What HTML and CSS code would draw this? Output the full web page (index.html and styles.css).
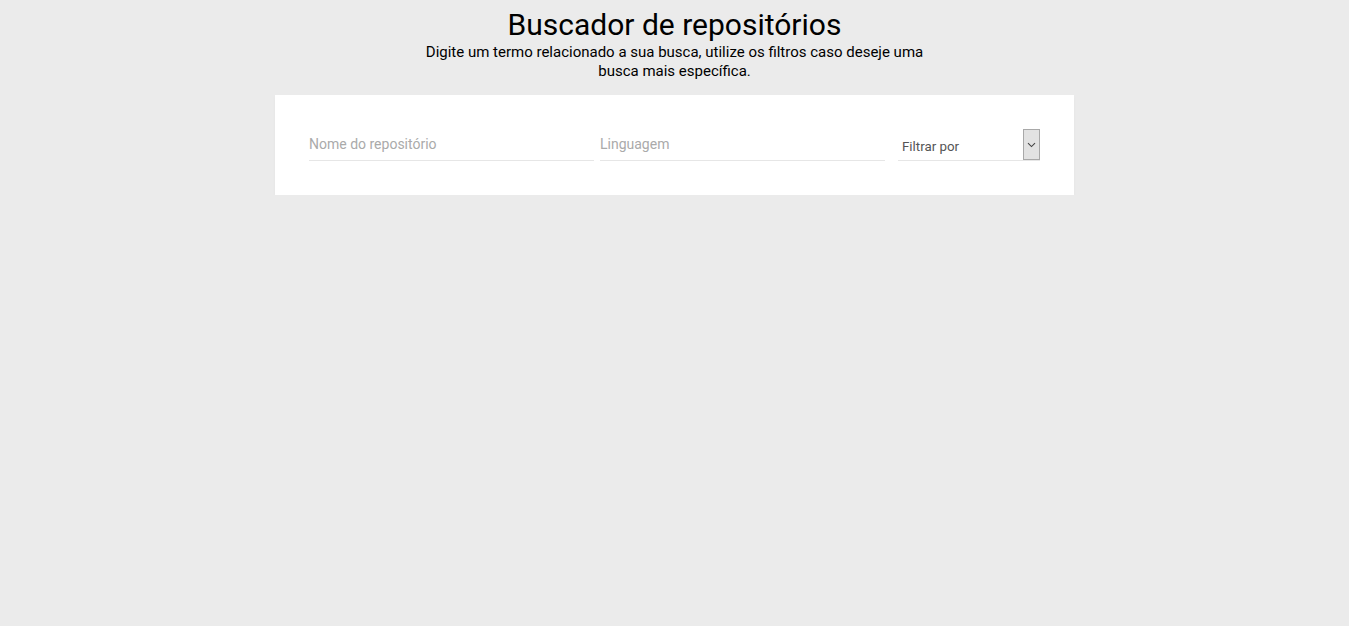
FILE: index.html
```html
<!DOCTYPE html>
<html lang="pt-BR">
<head>
<meta charset="utf-8">
<title>Buscador de repositórios</title>
<link rel="stylesheet" href="styles.css">
</head>
<body>
<header class="header">
  <h1 class="title">Buscador de repositórios</h1>
  <p class="subtitle">Digite um termo relacionado a sua busca, utilize os filtros caso deseje uma busca mais específica.</p>
</header>
<main class="card">
  <form class="filters">
    <input class="field field-name" type="text" placeholder="Nome do repositório">
    <input class="field field-lang" type="text" placeholder="Linguagem">
    <div class="select">
      <span class="select-label">Filtrar por</span>
      <span class="select-btn">
        <svg width="9" height="6" viewBox="0 0 9 6"><path d="M1 1.2 L4.5 4.6 L8 1.2" fill="none" stroke="#444" stroke-width="1.1"/></svg>
      </span>
    </div>
  </form>
</main>
</body>
</html>
```
FILE: styles.css
```css
* { box-sizing: border-box; }
html, body { margin: 0; padding: 0; }
body {
  background: #ebebeb;
  font-family: Roboto, "Liberation Sans", Arial, sans-serif;
  color: #000;
}
.header {
  display: flex;
  flex-direction: column;
  align-items: center;
  padding-top: 6px;
}
.title {
  margin: 0;
  font-size: 30px;
  font-weight: 400;
  line-height: 37px;
}
.subtitle {
  margin: 0;
  width: 510px;
  text-align: center;
  font-size: 15px;
  line-height: 19px;
}
.card {
  width: 799px;
  height: 100px;
  margin: 14px auto 0;
  background: #fff;
  padding: 34px 34px 0 34px;
  box-shadow: 0 2px 4px rgba(0,0,0,0.03);
}
.filters {
  display: flex;
  align-items: flex-end;
  height: 32px;
}
.field {
  width: 285px;
  height: 32px;
  border: none;
  border-bottom: 1px solid #e6e6e6;
  padding: 0 0 2px 0;
  font-family: inherit;
  font-size: 14px;
  color: #333;
  outline: none;
  background: transparent;
}
.field::placeholder { color: #aaa; }
.field-lang { margin-left: 6px; }
.select {
  margin-left: 13px;
  width: 142px;
  height: 32px;
  display: flex;
  align-items: stretch;
  border-bottom: 1px solid #e6e6e6;
}
.select-label {
  flex: 1;
  display: flex;
  align-items: center;
  padding: 3px 0 0 4px;
  font-size: 13.33px;
  color: #555;
}
.select-btn {
  width: 17px;
  height: 31px;
  background: #e2e2e2;
  border: 1px solid #a8a8a8;
  display: flex;
  align-items: center;
  justify-content: center;
}
```
